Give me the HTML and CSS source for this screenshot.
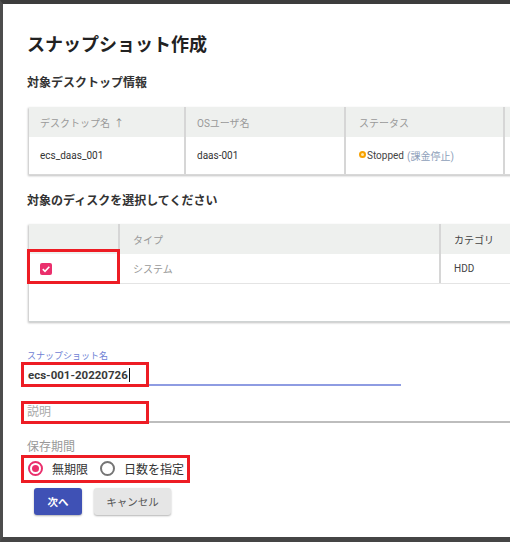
FILE: index.html
```html
<!DOCTYPE html>
<html lang="ja">
<head>
<meta charset="utf-8">
<link rel="stylesheet" href="styles.css">
</head>
<body>
<div class="frame">
  <h1 class="title">スナップショット作成</h1>

  <h2 class="section">対象デスクトップ情報</h2>
  <div class="table t1">
    <div class="row head">
      <div class="cell c1">デスクトップ名 <span class="arrow">&#8593;</span></div>
      <div class="cell c2">OSユーザ名</div>
      <div class="cell c3">ステータス</div>
      <div class="cell c4"></div>
    </div>
    <div class="row body">
      <div class="cell c1">ecs_daas_001</div>
      <div class="cell c2">daas-001</div>
      <div class="cell c3"><span class="status-dot"></span><span class="stopped">Stopped</span> <span class="billing">(課金停止)</span></div>
      <div class="cell c4"></div>
    </div>
  </div>

  <h2 class="section">対象のディスクを選択してください</h2>
  <div class="table t2">
    <div class="row head">
      <div class="cell d1"></div>
      <div class="cell d2">タイプ</div>
      <div class="cell d3">カテゴリ</div>
    </div>
    <div class="row body">
      <div class="cell d1"><span class="checkbox"><svg viewBox="0 0 12 12" width="12" height="12"><path d="M2.8 6.2 L5 8.3 L9.3 3.8" fill="none" stroke="#fff" stroke-width="1.6"/></svg></span></div>
      <div class="cell d2 muted">システム</div>
      <div class="cell d3">HDD</div>
    </div>
    <div class="empty"></div>
    <div class="mark mark-check"></div>
  </div>

  <div class="field">
    <div class="field-label">スナップショット名</div>
    <div class="input name-input"><span class="value">ecs-001-20220726</span><span class="caret"></span>
      <div class="mark mark-name"></div>
    </div>
  </div>

  <div class="field desc">
    <div class="input desc-input"><span class="placeholder">説明</span>
      <div class="mark mark-desc"></div>
    </div>
  </div>

  <div class="period-label">保存期間</div>
  <div class="radios">
    <label class="radio"><span class="ring on"><span class="dot"></span></span>無期限</label>
    <label class="radio"><span class="ring"></span>日数を指定</label>
    <div class="mark mark-radio"></div>
  </div>

  <div class="buttons">
    <button class="btn primary">次へ</button>
    <button class="btn secondary">キャンセル</button>
  </div>
</div>
</body>
</html>
```
FILE: styles.css
```css
html, body {
  margin: 0;
  padding: 0;
  background: #ffffff;
}
body {
  font-family: Roboto, "Noto Sans CJK JP", sans-serif;
  color: #333;
}
.frame {
  width: 510px;
  height: 542px;
  box-sizing: border-box;
  border-left: 3px solid #4d4d4d;
  border-top: 4px solid #3d3d3d;
  border-bottom: 5px solid #454545;
  padding-left: 24px;
  overflow: hidden;
  background: #fff;
}
.title {
  margin: 29px 0 0 0;
  font-size: 18px;
  line-height: 24px;
  font-weight: 700;
  color: #222;
}
.section {
  margin: 17px 0 0 0;
  font-size: 12px;
  line-height: 18px;
  font-weight: 700;
  color: #333;
}
.table {
  position: relative;
  margin: 15px 0 0 2px;
  width: 620px;
  background: #fff;
  box-shadow: -1px 1px 2px rgba(0,0,0,0.25);
  font-size: 10px;
}
.t2 { margin-top: 14px; }
.row {
  display: flex;
}
.row.head {
  height: 30px;
  background: #eef0ee;
  color: #999;
}
.t1 .row.body { height: 37px; border-bottom: 1px solid #d8d8d8; }
.t2 .row.body { height: 29px; border-bottom: 1px solid #e4e4e4; }
.cell {
  box-sizing: border-box;
  display: flex;
  align-items: center;
  padding-left: 11px;
  border-right: 2px solid #d6d6d6;
  white-space: nowrap;
}
.c1 { width: 157px; }
.c2 { width: 160px; padding-left: 11px; }
.c3 { width: 159px; padding-left: 13px; }
.c4 { flex: 1; border-right: none; }
.d1 { width: 91px; }
.d2 { width: 321px; padding-left: 13px; }
.d3 { flex: 1; padding-left: 13px; border-right: none; color: #444; }
.arrow { margin-left: 4px; font-size: 10px; color: #888; }
.muted { color: #999; }
.status-dot {
  display: inline-block;
  box-sizing: border-box;
  width: 7px;
  height: 7px;
  border-radius: 50%;
  border: 2px solid #f7a100;
  background: #ffe8a8;
  margin-right: 1px;
  margin-top: -3px;
}
.stopped { color: #444; }
.billing { color: #8e9fba; margin-left: 3px; }
.checkbox {
  display: inline-flex;
  width: 12px;
  height: 12px;
  border-radius: 2px;
  background: #ea2f6c;
}
.empty { height: 37px; border-bottom: 1px solid #cfd3d3; }
.mark {
  position: absolute;
  box-sizing: border-box;
  border: 3px solid #ed1c24;
  pointer-events: none;
}
.mark-check { left: -2px; top: 25px; width: 93px; height: 35px; }

.field { margin-top: 28px; }
.field-label {
  font-size: 9px;
  line-height: 12px;
  color: #6f82d4;
}
.input {
  position: relative;
  margin-top: 4px;
  height: 18px;
  line-height: 18px;
  font-size: 12px;
  display: flex;
  align-items: center;
}
.name-input {
  width: 374px;
  border-bottom: 2px solid #8e9ce2;
}
.value {
  font-size: 11.5px;
  font-weight: 700;
  color: #3a3a3a;
  padding-left: 1px;
}
.caret {
  display: inline-block;
  width: 1px;
  height: 14px;
  background: #111;
  margin-left: 1px;
}
.field.desc { margin-top: 17px; }
.desc-input {
  margin-top: 0;
  width: 520px;
  border-bottom: 2px solid #bdbdbd;
}
.placeholder { color: #aaa; }
.mark-name { left: -6px; top: -4px; width: 128px; height: 25px; }
.mark-desc { left: -6px; top: -2px; width: 128px; height: 23px; }

.period-label {
  margin-top: 15px;
  font-size: 12px;
  line-height: 18px;
  color: #999;
}
.radios {
  position: relative;
  margin-top: 3px;
  height: 18px;
  display: flex;
  align-items: center;
  font-size: 12px;
  color: #333;
}
.radio {
  display: flex;
  align-items: center;
  margin-right: 12px;
}
.ring {
  box-sizing: border-box;
  width: 15px;
  height: 15px;
  border-radius: 50%;
  border: 2px solid #757575;
  display: flex;
  align-items: center;
  justify-content: center;
  margin-right: 9px;
}
.radio:first-child .ring { margin-left: 1px; }
.ring.on { border-color: #ea2f6c; }
.dot {
  width: 7px;
  height: 7px;
  border-radius: 50%;
  background: #ea2f6c;
}
.mark-radio { left: -6px; top: -4px; width: 169px; height: 28px; }

.buttons {
  margin-top: 11px;
  display: flex;
  gap: 12px;
  padding-left: 7px;
}
.btn {
  font-family: Roboto, "Noto Sans CJK JP", sans-serif;
  height: 27px;
  border: none;
  border-radius: 3px;
  font-size: 10.5px;
  padding: 0;
  box-shadow: 0 1px 2px rgba(0,0,0,0.3);
}
.primary {
  width: 48px;
  background: #3f51b5;
  color: #fff;
  font-weight: 700;
}
.secondary {
  width: 77px;
  background: #e6e6e6;
  color: #555;
}
```
